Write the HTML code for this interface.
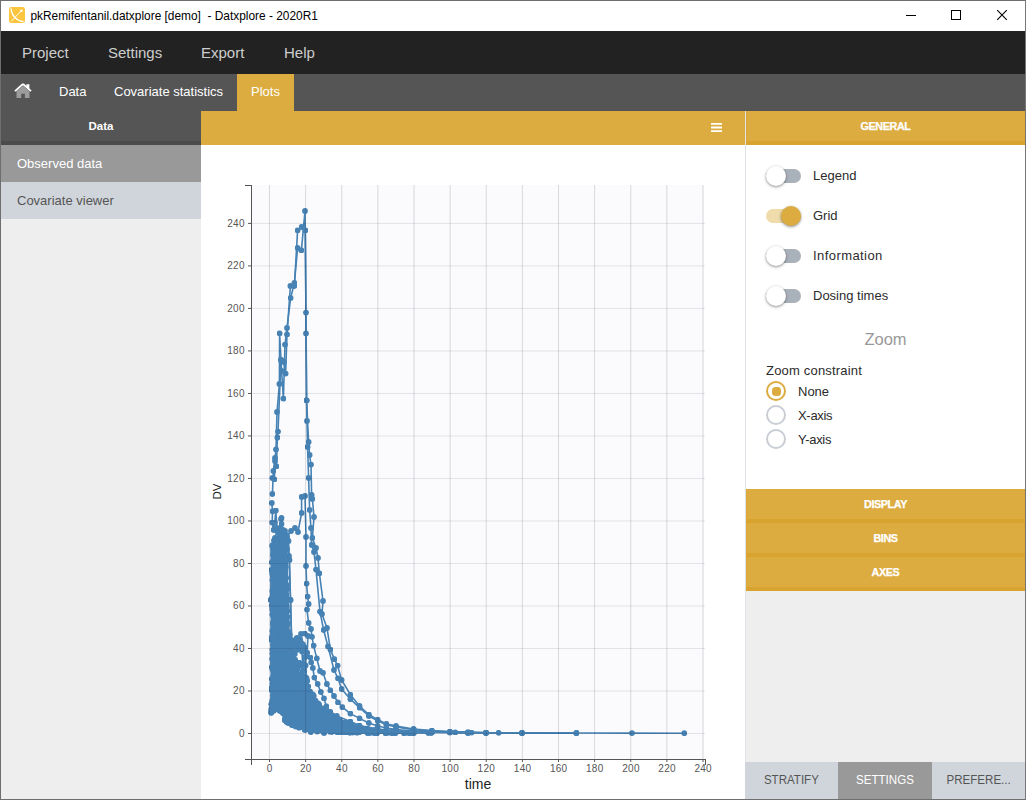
<!DOCTYPE html>
<html lang="en">
<head>
<meta charset="utf-8">
<title>pkRemifentanil.datxplore [demo] - Datxplore - 2020R1</title>
<style>
*{box-sizing:border-box;margin:0;padding:0}
html,body{width:1026px;height:800px;overflow:hidden;background:#fff}
body{font-family:"Liberation Sans",sans-serif;position:relative;color:#333}
.abs{position:absolute}
.t{position:absolute;white-space:nowrap;line-height:1}
#frame{position:absolute;left:0;top:0;width:1026px;height:800px;border:1px solid #6e6e6e;border-right-color:#777;z-index:50;pointer-events:none}
#titlebar{left:1px;top:1px;width:1024px;height:30px;background:#fff}
#menubar{left:1px;top:31px;width:1024px;height:43px;background:#222}
#tabbar{left:1px;top:74px;width:1024px;height:37px;background:#555}
#menubar .t{color:#cecece;font-size:15px;top:14px}
#tabbar .t{color:#fff;font-size:13px;top:11px}
#plotstab{left:236px;top:0;width:57px;height:37px;background:#dcac40}
#left{left:1px;top:111px;width:200px;height:688px;background:#eee}
#lefthead{left:0;top:0;width:200px;height:34px;background:#555;border-bottom:4px solid #4a4a4a}
#obs{left:0;top:34px;width:200px;height:37px;background:#999}
#cov{left:0;top:71px;width:200px;height:37px;background:#d0d5dc}
#center{left:201px;top:111px;width:544px;height:688px;background:#fff}
#centerhead{left:0;top:0;width:544px;height:34px;background:#dcac40}
#right{left:745px;top:111px;width:280px;height:688px;background:#eee;border-left:1px solid #dfe3e8}
.sec{position:absolute;left:0;width:279px;background:#dcac40;border-bottom:4px solid #d9a330;border-left:1px solid #dba737;border-right:1px solid #dba737;color:#fff;font-weight:bold;font-size:10.8px;letter-spacing:-.4px;text-align:center;-webkit-text-stroke:.25px #fff}
#general{top:0;height:34px;line-height:30px}
#rcontent{left:0;top:34px;width:279px;height:344px;background:#fff}
.track{position:absolute;left:20px;width:35px;height:14px;border-radius:7px;background:#a9b1bb}
.knob{position:absolute;margin-left:1px;width:20px;height:20px;border-radius:50%;background:#fff;box-shadow:0 1px 3px rgba(0,0,0,.45)}
.lbl{position:absolute;left:67px;font-size:13px;color:#2b2b2b;white-space:nowrap;line-height:1}
.radio{position:absolute;left:20px;width:20px;height:20px;border-radius:50%;border:2px solid #c9ced4;background:#fff}
.radio.on{border-color:#dcac40}
.radio.on::after{content:"";position:absolute;left:3.500px;top:3.500px;width:9px;height:9px;border-radius:3.500px;background:#dcac40}
.btab{position:absolute;top:651px;height:37px;font-size:13.2px;line-height:35px;text-align:center;color:#555;background:#d0d5dc}
.btab span{display:inline-block;transform:scaleX(.875)}
</style>
</head>
<body>
<div id="titlebar" class="abs">
  <svg class="abs" style="left:8px;top:6px" width="16" height="16" viewBox="0 0 17 17"><rect x="0" y="0" width="17" height="17" rx="2.5" fill="#fbc540"/><path d="M2 1.5C3 9 7.5 14.5 15.5 15.5" fill="none" stroke="#fff" stroke-width="1.3"/><path d="M2.5 15L13 4.2" fill="none" stroke="#fff" stroke-width="1"/><circle cx="13.2" cy="4" r="1.3" fill="#fff"/></svg>
  <div class="t" id="title" style="left:29.400px;top:10px;font-size:11.9px;color:#000">pkRemifentanil.datxplore [demo]&nbsp; - Datxplore - 2020R1</div>
  <svg class="abs" style="left:900px;top:0" width="124" height="30" viewBox="0 0 124 30"><g stroke="#000" stroke-width="1" fill="none" shape-rendering="crispEdges"><path d="M5 14.5h10"/><rect x="50.5" y="9.5" width="9" height="9"/></g><path d="M96.200 9.200l9.600 9.600M105.800 9.200l-9.600 9.600" stroke="#000" stroke-width="1.1" fill="none"/></svg>
</div>
<div id="menubar" class="abs">
  <div class="t" style="left:21px">Project</div>
  <div class="t" style="left:107px">Settings</div>
  <div class="t" style="left:200px">Export</div>
  <div class="t" style="left:283px">Help</div>
</div>
<div id="tabbar" class="abs">
  <svg class="abs" style="left:13px;top:9px" width="18" height="16" viewBox="0 0 18 16"><path d="M9 1L1 8.2" stroke="#fff" stroke-width="1.8" fill="none"/><path d="M9 1L17 8.2" stroke="#fff" stroke-width="1.8" fill="none"/><path d="M12.4 1.3h3v5.200l-3-2.700z" fill="#fff"/><path d="M2.5 8.2L9 2.800l6.500 5.400V15h-4.600v-4.300H7.200V15H2.500z" fill="#9c9c9c"/></svg>
  <div class="t" style="left:58px">Data</div>
  <div class="t" style="left:113px">Covariate statistics</div>
  <div id="plotstab" class="abs"><div class="t" style="left:14px">Plots</div></div>
</div>
<div id="left" class="abs">
  <div id="lefthead" class="abs"><div class="t" style="left:0;width:200px;text-align:center;top:10px;font-size:11.5px;font-weight:bold;color:#fff">Data</div></div>
  <div id="obs" class="abs"><div class="t" style="left:16px;top:12px;font-size:13px;color:#fff">Observed data</div></div>
  <div id="cov" class="abs"><div class="t" style="left:16px;top:12px;font-size:13px;color:#555">Covariate viewer</div></div>
</div>
<div id="center" class="abs">
  <div id="centerhead" class="abs">
    <svg class="abs" style="left:509px;top:11px" width="13" height="12" viewBox="0 0 13 12"><path d="M1 1.900h11M1 5.500h11M1 9.100h11" stroke="#fff" stroke-width="1.800" fill="none"/></svg>
  </div>
</div>
<svg id="chart" class="abs" style="left:0;top:0" width="1026" height="800" viewBox="0 0 1026 800">
  <rect x="252" y="185" width="452" height="574" fill="#fbfbfd"/>
  <g stroke="#555" stroke-width="1" fill="none" shape-rendering="crispEdges">
    <path d="M245 185.500H251.500V759.500"/>
    <path d="M245 759.500H705.500V765"/>
    <path d="M251.500 759.500V765"/>
  </g>
  <g stroke="#555" stroke-width="1" fill="none">
    <path d="M269.50 759.5V762"/>
    <path d="M305.62 759.5V762"/>
    <path d="M341.75 759.5V762"/>
    <path d="M377.88 759.5V762"/>
    <path d="M414.00 759.5V762"/>
    <path d="M450.12 759.5V762"/>
    <path d="M486.25 759.5V762"/>
    <path d="M522.38 759.5V762"/>
    <path d="M558.50 759.5V762"/>
    <path d="M594.62 759.5V762"/>
    <path d="M630.75 759.5V762"/>
    <path d="M666.88 759.5V762"/>
    <path d="M703.00 759.5V762"/>
    <path d="M248 733.50H251.5"/>
    <path d="M248 690.99H251.5"/>
    <path d="M248 648.48H251.5"/>
    <path d="M248 605.98H251.5"/>
    <path d="M248 563.47H251.5"/>
    <path d="M248 520.96H251.5"/>
    <path d="M248 478.45H251.5"/>
    <path d="M248 435.94H251.5"/>
    <path d="M248 393.44H251.5"/>
    <path d="M248 350.93H251.5"/>
    <path d="M248 308.42H251.5"/>
    <path d="M248 265.91H251.5"/>
    <path d="M248 223.40H251.5"/>
  </g>
  <g font-family="Liberation Sans, sans-serif" font-size="10" fill="#555" letter-spacing="0.300">
    <text x="269.7" y="772" text-anchor="middle">0</text>
    <text x="305.8" y="772" text-anchor="middle">20</text>
    <text x="341.9" y="772" text-anchor="middle">40</text>
    <text x="378.1" y="772" text-anchor="middle">60</text>
    <text x="414.2" y="772" text-anchor="middle">80</text>
    <text x="450.3" y="772" text-anchor="middle">100</text>
    <text x="486.4" y="772" text-anchor="middle">120</text>
    <text x="522.6" y="772" text-anchor="middle">140</text>
    <text x="558.7" y="772" text-anchor="middle">160</text>
    <text x="594.8" y="772" text-anchor="middle">180</text>
    <text x="631.0" y="772" text-anchor="middle">200</text>
    <text x="667.1" y="772" text-anchor="middle">220</text>
    <text x="703.2" y="772" text-anchor="middle">240</text>
    <text x="244.8" y="736.6" text-anchor="end">0</text>
    <text x="244.8" y="694.1" text-anchor="end">20</text>
    <text x="244.8" y="651.6" text-anchor="end">40</text>
    <text x="244.8" y="609.1" text-anchor="end">60</text>
    <text x="244.8" y="566.6" text-anchor="end">80</text>
    <text x="244.8" y="524.1" text-anchor="end">100</text>
    <text x="244.8" y="481.6" text-anchor="end">120</text>
    <text x="244.8" y="439.0" text-anchor="end">140</text>
    <text x="244.8" y="396.5" text-anchor="end">160</text>
    <text x="244.8" y="354.0" text-anchor="end">180</text>
    <text x="244.8" y="311.5" text-anchor="end">200</text>
    <text x="244.8" y="269.0" text-anchor="end">220</text>
    <text x="244.8" y="226.5" text-anchor="end">240</text>
  </g>
  <text x="478" y="788.500" text-anchor="middle" font-family="Liberation Sans, sans-serif" font-size="14" fill="#222">time</text>
  <text transform="translate(221 491.500) rotate(-90)" text-anchor="middle" font-family="Liberation Sans, sans-serif" font-size="11.5" fill="#222">DV</text>
  <defs><marker id="m" markerWidth="6" markerHeight="6" refX="3" refY="3" markerUnits="userSpaceOnUse"><circle cx="3" cy="3" r="2.900" fill="#4682b4"/></marker></defs>
  <polygon id="core" fill="#4682b4" points="270.500,558 272,551 276,548 280,545 284,547 287,553 288,562 288.500,600 290,640 296,652 296,668 302,676 309,688 319,702 332,718 348,727 365,731 380,732.5 343,733 324,731.5 306.4,728 294.4,722.5 288,718.5 283,709 279.900,706.500 276,706 271.500,710 270.500,706"/>
  <g fill="none" stroke="#4682b4" stroke-width="1.600" stroke-linejoin="round" marker-start="url(#m)" marker-mid="url(#m)" marker-end="url(#m)">
<polyline points="272.4,494 273.4,471 275,458 276,449.4 277,412 279.4,384 279.6,333.4 281,360 281.6,371 283.4,398.6 285,344.6 287,328 290.6,298 294.4,283 297.6,248 301.4,250.4 305,211 306,312.6 306.6,400.4 307,421 307.6,447 308.6,478 309.6,510 311,528 311.6,545 314,552 316,569.6 320,611.6 323.6,630 328,646.4 334,670 338,678.4 341.6,689 350.4,699.2 359.5,707.7 368.8,716 377.6,720.8 386.4,724.8 396,726.9 413.6,729.6 431.8,731 449.9,731.8 486,732.5"/>
<polyline points="272.4,478 274.4,479.4 275,461 276.4,466.4 277.4,437.6 278,431.6 281,360 284,362 285.6,373.6 287,334.4 290.4,286 294.4,286 297.6,230.4 301.6,227 305.4,230.4 306,333.4 306.6,400.4 308.6,442 309.6,455 311,464.6 311.6,495 312.4,499 314,517 312.4,538 316,548 318,558 319.4,573.4 323,601 322,614 327,628 330.4,649.6 334.4,659.2 337.6,665.6 341.6,680 350.4,694.7 359.5,706 368.8,714.5 377.6,719.6 386.4,723.8 396,726 413.6,729 431.8,730.6 449.9,731.6 468,732.2"/>
<polyline points="271.5,640 273,600 275,570 277,552 279,540 281,519 283,530 285,534 287,536 291,531 295,528 298,532 301.6,513 301.6,497 305,496 306,537 306,566 306.6,583.6 307.6,596.6 308.6,604 307,609.6 308.6,623 311,629 312,636.8 313.6,645.6 316.8,658.4 320,671 323,672.8 326.9,684 330.4,690.4 334,696 338,702.4 342.4,707.2 350.4,713.6 359.5,718.4 368.8,723 377.6,726 386.4,728 396,729.5 413.6,731 449.9,732.3 486,732.8 522,733 576.4,733.1"/>
<polyline points="271.5,690 273,668 275,655 278,648 282,644 287,640 292,641 297,638 301,634 304.8,633.6 308,636 307.2,652.8 310.4,657.6 311.2,662.4 312.8,668 314.4,677.6 317.6,684 320.8,692 324,698.4 326.4,706.4 330.4,712 336.8,716 350.4,721.6 359.5,725.6 377.6,729 396,731 431.8,732.4 468,733"/>
<polyline points="350.4,728 368.8,730 386.4,731 413.6,731.6 431.8,732 449.9,732.3 455.3,732.4 468,732.5 471.5,732.6 486,732.7 498.6,732.8 522,732.9 576.4,733 632,733.1 684.3,733.2"/>
<polyline points="341,726 359.5,729 377.6,730.5 396,731.2 413.6,731.8 431.8,732.2 449.9,732.5 468,732.7 486,732.9 522,733 576.4,733.1"/>
<polyline points="271.2,712.8 272.2,711 274,710.5 276,709 278,708.5 279.9,707.6 281.5,709 283,711 285,715 288,720.6 290.5,722 293,723.5 296,725.5 299.4,727 305,730 310.8,732 324,733"/>
<polyline points="270.5,600 271.5,570 273,548 275,538 277,531 279,533 281.5,518 281.5,524 283,534 285,531 287,538 288.5,541 289.5,560 290.5,600 291.5,640 293,670 296,690 300,705 306,716 315,724 330,730 350,732.5"/>
<polyline points="271.8,503 272.5,511.3 272.2,522.5 273.5,530 274.8,522.5 275.8,510.5 277,528 279,540 281,548 284,552 287,549 289,556 290.5,600 292,650 295,680 300,700 310,718 325,728 345,732"/>
<polyline points="273.1,701.4 274,702.3 274.9,703.8 275.8,702.8 276.7,701 277.6,697.3 279.4,704.8 281.2,701.2 282.1,696.4 283.9,696.8 284.9,694.9 285,696.2 285.9,710.9 286.8,715.8 287.7,719.4 288.6,720.5 290.4,722.5 292.3,724.1 294.1,724.2 295.9,725.4 299.5,726.5 303.1,727.3 306.7,728.4 312.1,729.5 317.5,730.3 324.8,731 332,731.8 339.2,732.2"/>
<polyline points="273.1,699.1 274,699.2 274.9,694.3 275.8,696.9 276.7,700.4 277.6,702.1 279.4,703.3 280.3,691.6 282.1,700.9 283.9,698.3 285.1,698.6 286,709.6 286.9,713 287.8,717 288.7,717.9 290.5,719.6 292.3,721.3 294.1,721.9 295.9,723.5 299.5,724.3 303.1,726.1 306.7,727.7 312.2,728.3 317.6,729.5 324.8,730.4 332,731.2 339.2,731.8 348.3,732.3"/>
<polyline points="273.1,698.1 274,702.8 274.9,695.1 275.8,706 276.7,702.3 277.4,697.2 278.3,706.8 279.2,710 280.1,710.9 281,711 282.8,713 284.6,719.5 286.4,720.2 288.2,720.8 291.8,723.7 295.4,725.2 299.1,726 304.5,727.5 309.9,728.4 317.1,729.7 324.3,730.6 331.6,731.5 340.6,732.1 349.6,732.5 367.7,733 385.8,733.2"/>
<polyline points="273.1,695.3 274,690.9 274.9,687.2 275.8,695.9 276.7,694.9 278.5,683.1 280.3,689.4 281.2,701.4 283,685.5 283.1,681.8 284,697.9 284.9,705.1 285.8,707.8 286.7,711.1 288.5,714 290.3,716.6 292.2,719.2 294,719.8 297.6,722.2 301.2,724.8 304.8,725.8 310.2,728.2 315.6,729.7 322.9,730.8 330.1,731.7 337.3,732.3"/>
<polyline points="274,686.6 274.9,687.6 275.8,678.5 276.7,683.2 277.4,689.1 278.3,700 279.3,706.5 280.2,709.9 281.1,710.1 282.9,712.7 284.7,720.2 286.5,722 288.3,723.1 291.9,725.2 295.5,726.6 299.1,727.7 304.5,729.4 310,730.6 317.2,731.6 324.4,732.1"/>
<polyline points="273.1,684.1 274,690.9 274.9,679.1 275.8,677.5 276.7,685.2 278.5,687.9 280,680.6 280.9,699.2 281.8,706.3 282.7,709.5 283.6,709.2 285.4,715.9 287.2,717.8 289,718.9 290.8,719.7 294.4,720.8 298,722.7 301.6,724.7 307.1,725.9 312.5,727 319.7,728.5 326.9,730.1 334.2,730.5 343.2,731.6 352.2,732 370.3,732.7"/>
<polyline points="272.4,683.5 273.3,683.9 274.2,686.7 275.1,679.8 276,690.1 276.9,683.4 277.8,687.9 278.7,680 280.5,687.9 282.3,683.7 284.1,679.6 285.9,684.2 286.2,680.9 287.2,698 288.1,705.7 289,707.5 289.9,711.4 291.7,713.4 293.5,715.4 295.3,718.4 297.1,719 300.7,721.4 304.3,722.4 307.9,723.1 313.3,725.6 318.8,726.7 326,728.4 333.2,729.4 340.4,730.4 349.5,731.3 358.5,731.9"/>
<polyline points="272.4,688.5 273.3,682 274.2,681 275.1,683.6 276,677 276.9,683.8 277.8,679.9 279.6,678.9 280.5,677.5 282.3,675.5 284.1,671.5 285.3,669 286.2,685.2 287.1,695 288,696.3 288.9,698.9 290.7,704 292.5,707.1 294.3,707.5 296.1,708.5 299.7,712.7 303.3,714.9 307,718.8 312.4,721.4 317.8,723.8 325,726.1 332.2,727.8 339.5,729.2 348.5,730.5 357.5,731.4 375.6,732.5"/>
<polyline points="272.4,669 273.3,675.7 274.2,675.3 275.1,667 276,678.8 276.9,669.9 278.7,665.4 279.6,670 281.4,668.5 283.2,669.3 284.1,676.3 285.9,673.6 286.6,669.5 287.6,693.5 288.5,701.9 289.4,708.7 290.3,710.1 292.1,712 293.9,713.9 295.7,715.9 297.5,717.4 301.1,720.5 304.7,720.9 308.3,723.3 313.7,725.3 319.2,727.5 326.4,729 333.6,730.4 340.8,731 349.9,731.8 358.9,732.4 377,732.9 395,733.2 413.1,733.3"/>
<polyline points="271.8,687.4 272.8,682.9 273.7,676.7 274.6,677.3 275.5,676.2 276.4,689 277.3,677.7 279.1,669.7 280.9,666.1 282.7,670.9 283.6,679 284.7,679.1 285.6,693.5 286.6,700.4 287.5,708.4 288.4,712.8 290.2,715.3 292,717.5 293.8,721.1 295.6,720.7 299.2,722.6 302.8,724.3 306.4,726.4 311.8,727.5 317.3,728.9 324.5,730 331.7,731 338.9,732 348,732.3 357,732.7"/>
<polyline points="273.1,666.2 274,661 274.9,658.4 275.8,667.8 276.7,665.4 277.6,668.8 278.5,664.5 279.4,659.3 281.2,665.5 282.1,655.5 283,649.8 284.9,660.7 285.9,655 286.8,681.4 287.7,692.8 288.6,699.9 289.5,701.4 291.3,708 293.1,709.2 294.9,712.2 296.7,712.1 300.3,715.9 303.9,718.9 307.5,721 313,723 318.4,725.6 325.6,727.8 332.8,728.9 340,730.2 349.1,731.4 358.1,731.9 376.2,732.7 394.2,733.1"/>
<polyline points="272.4,679.2 273.3,678.6 274.2,670.7 275.1,665.4 276,664.7 276.9,666.9 278.7,676.1 279.6,667.6 281.4,674 282.3,662.7 283.2,658.5 283.3,664.5 284.2,685.7 285.1,693.1 286,700.4 286.9,702.6 288.7,706.9 290.5,708.6 292.3,708.8 294.1,713.1 297.7,714.9 301.3,718.1 304.9,719 310.4,723.2 315.8,724.7 323,726.8 330.2,728.6 337.4,729.6 346.5,730.9 355.5,731.7 373.6,732.6"/>
<polyline points="273.1,664 274,685.3 274.9,667 275.8,664 276.7,671.2 278.5,677.7 280.2,669.5 281.1,690.7 282,700.4 282.9,708.5 283.8,710.3 285.6,713.1 287.4,715.8 289.3,717.3 291.1,719.5 294.7,721 298.3,722.9 301.9,724.1 307.3,726.2 312.7,727.8 320,729.3 327.2,730.3 334.4,731.1 343.4,732 352.5,732.5"/>
<polyline points="273.1,677.3 274,676.1 274.9,678.6 275.8,674.7 276.7,658.8 278.5,665.5 280.3,656.9 282.1,667.9 283,652.1 284.1,676.8 285,687.2 285.9,698.5 286.8,701.1 287.7,703.7 289.5,708.9 291.3,711.5 293.1,713.7 294.9,714.2 298.5,717.8 302.1,721 305.7,721.8 311.1,724.4 316.6,726.2 323.8,728.4 331,729.9 338.2,730.7 347.3,731.6 356.3,732.2 374.4,732.8 392.4,733.2 410.5,733.3"/>
<polyline points="271.8,679 272.8,681.7 273.7,682.7 274.6,661.4 275.5,668.8 276.4,669.9 277.3,667.9 279.1,668.5 280.9,660.8 281.8,667.5 283.3,667.1 284.2,675.9 285.1,685.7 286.1,689.6 287,691.8 288.8,696.5 290.6,698 292.4,700.3 294.2,702.6 297.8,709.2 301.4,711.8 305,714.8 310.4,716.8 315.9,720.3 323.1,724.5 330.3,725.9 337.5,727.6 346.6,729.5 355.6,730.6 373.7,732 391.7,732.7 409.8,733.1"/>
<polyline points="272.4,659.4 273.3,654.5 274.2,663.3 275.1,658.9 276,646.9 276.9,650.8 278.7,633 279.5,655.2 280.4,674.5 281.3,677.7 282.2,684.5 283.1,692.1 284.9,694.9 286.7,697.5 288.5,701.7 290.4,703.6 294,709.8 297.6,713 301.2,716.4 306.6,720 312,723.2 319.3,726.5 326.5,728.3 333.7,729.9 342.7,731.2 351.8,731.9 369.8,732.8"/>
<polyline points="272.4,658.3 273.3,659 274.2,670 275.1,659.5 276,663.6 276.9,624.3 277.8,646.1 279.6,641.7 280.5,661.4 281.4,661.2 282.3,645.2 283.2,662.3 285,652.5 286.7,649.2 287.6,675.8 288.6,683.2 289.5,690.6 290.4,698.1 292.2,704 294,706.5 295.8,705.3 297.6,710.5 301.2,713.7 304.8,714.3 308.4,717.3 313.8,720 319.3,723 326.5,724.6 333.7,727 340.9,728.4 350,730 359,730.9 377.1,732 395.1,732.7"/>
<polyline points="272.4,653.6 273.3,671.4 274.2,654.2 275.1,643.3 276,670.3 276.9,627.6 277.8,656.7 278.7,640.8 280.5,651.7 281.4,645.5 283.2,652.1 285,661.2 285.9,638.1 286,644.8 286.9,665.6 287.8,674.2 288.7,679.8 289.6,688.6 291.4,693.3 293.3,696.4 295.1,699.6 296.9,703.4 300.5,709.7 304.1,710.1 307.7,714.2 313.1,718.4 318.5,721.7 325.8,724.6 333,727.2 340.2,728.9 349.2,730.3 358.3,731.3 376.3,732.4 394.4,733 412.5,733.2"/>
<polyline points="272.4,649.5 273.3,659.5 274.2,635.1 275.1,632.5 276,632.8 276.9,637.6 278.7,642.9 280.5,644.5 282.3,643.5 283.2,645.9 284.7,645.5 285.6,658.4 286.5,675.3 287.4,686.9 288.3,689.2 290.1,695.7 292,696.9 293.8,702 295.6,702.6 299.2,705.3 302.8,711.2 306.4,713.7 311.8,716.6 317.2,719 324.5,721.9 331.7,725 338.9,727.1 347.9,728.7 357,729.9 375,731.5 393.1,732.4 411.2,732.9"/>
<polyline points="273.1,655.1 274,653.4 274.9,633.8 275.8,644.6 276.7,648 277.6,639.7 279.4,637 281.2,645.4 283,650.1 284.9,644.7 285.6,634.6 286.5,663.5 287.4,674.8 288.3,681.6 289.2,690.3 291,693.2 292.8,697.4 294.6,701.9 296.4,704.4 300,708.6 303.6,714.2 307.2,717.7 312.7,722 318.1,724.7 325.3,727.7 332.5,729.4 339.7,730.8 348.8,731.7 357.8,732.3 375.9,732.9"/>
<polyline points="274,647.4 274.9,660.3 275.8,661.5 276.7,651.9 277.6,648 279.4,647.3 281.2,643.2 282.8,647.8 283.7,664.6 284.6,674.1 285.5,684.6 286.4,689.2 288.2,694.9 290,696.3 291.8,701.5 293.6,704.3 297.3,712 300.9,716.1 304.5,718.1 309.9,722.6 315.3,725.4 322.5,728 329.8,730 337,730.8 346,731.8 355.1,732.4"/>
<polyline points="274,653.4 274.9,645.6 275.8,639.1 276.7,623.1 278.5,638.2 280.3,622.1 282.1,645.8 282.9,618.3 283.8,662.4 284.7,682.4 285.6,691.5 286.5,697.5 288.3,701.6 290.1,701.9 291.9,705.8 293.7,709.4 297.3,712.9 300.9,714.6 304.5,718.4 309.9,721.6 315.4,724.1 322.6,726.5 329.8,728.3 337,729.9 346.1,731.2 355.1,731.9"/>
<polyline points="271.8,667.1 272.8,664.3 273.7,663 274.6,666.1 275.5,654.3 276.4,643.7 277.3,628.6 278.2,651.7 280,643.7 281.8,655.2 283.1,638 284,676.2 284.9,688.9 285.8,695 286.7,702 288.5,702.1 290.3,704.8 292.1,707.8 293.9,708.5 297.5,713.5 301.1,715.9 304.8,717.8 310.2,720.4 315.6,721.7 322.8,724.9 330,726.9 337.3,728.4 346.3,729.6 355.3,730.7 373.4,731.9 391.5,732.6 409.5,733"/>
<polyline points="271.8,637.9 272.8,644.6 273.7,632.6 274.6,619.2 275.5,635.6 276.4,635.2 277.3,628 278.2,644.9 280,647.3 281.8,616.4 282.7,622.7 284.5,628.4 285.9,619.5 286.8,651 287.7,664.8 288.6,664.2 289.5,672.7 291.3,677.2 293.1,687.2 294.9,688.2 296.7,690.7 300.4,698.5 304,701.9 307.6,704.6 313,709.7 318.4,713.8 325.6,720 332.9,723.5 340.1,725.2 349.1,727.5 358.2,729.4 376.2,731.5 394.3,732.4 412.3,732.9"/>
<polyline points="272.4,614.4 273.3,630.6 274.2,617.5 275.1,618.2 276,624.8 276.9,634.6 278.7,615.9 279.6,616.9 280.5,637.4 282.3,609.4 284.1,629.5 285.4,630.3 286.3,641.1 287.2,655.5 288.1,671.7 289,672.3 290.8,680.4 292.6,688.1 294.4,693.1 296.2,694.8 299.8,699.7 303.4,702.8 307.1,707.5 312.5,713.7 317.9,715.8 325.1,720.9 332.3,722.9 339.6,726.1 348.6,728.1 357.6,729.6 375.7,731.4 393.8,732.3"/>
<polyline points="272.4,630.9 273.3,625.8 274.2,618.5 275.1,618 276,614.8 276.9,623.2 278.7,627 280.5,616.7 282.3,615.4 283.2,628.8 285,651.8 286.5,608.4 287.4,647.8 288.3,662.5 289.2,670.8 290.1,681.1 291.9,688.2 293.7,692.4 295.5,694.6 297.3,696.6 301,703.6 304.6,708.8 308.2,712.1 313.6,718.4 319,721.9 326.2,725.6 333.5,727.6 340.7,729.3 349.7,731.1 358.8,731.7 376.8,732.6 394.9,733.1 412.9,733.3"/>
<polyline points="272.4,605.9 273.3,623 274.2,638 275.1,618.5 276,627.1 276.9,600.7 277.4,619.5 278.3,641.6 279.2,660.5 280.1,671.1 281,673.5 282.8,681.3 284.6,686.7 286.5,690.7 288.3,695.5 291.9,704.5 295.5,706.6 299.1,713.9 304.5,718.5 309.9,722.8 317.2,726.1 324.4,728.3 331.6,729.9 340.6,731.3 349.7,732 367.7,732.9 385.8,733.2 403.9,733.3"/>
<polyline points="273.1,622.4 274,645.5 274.9,615.8 275.8,647.3 276.7,619.5 278.5,611.3 280.3,603.6 281.2,624 283,598.1 284.9,625.8 285.8,610.2 286.3,594.4 287.2,643.6 288.1,662.2 289,674.2 289.9,685 291.7,695.1 293.5,698.5 295.3,703.9 297.1,705.6 300.7,712.3 304.4,715.5 308,718.9 313.4,722.8 318.8,725.7 326,728 333.3,729.6 340.5,730.8 349.5,731.8 358.5,732.4 376.6,733 394.7,733.2"/>
<polyline points="273.1,632.8 274,627 274.9,629.2 275.8,610.7 276.7,620.8 278.5,628.8 280.3,622.2 282.1,610 283.9,627.2 284.8,601.9 285.7,639.4 286.6,660.5 287.5,669.2 288.4,673.7 290.2,682.3 292,691.1 293.8,696.4 295.6,696 299.2,701.2 302.9,706.7 306.5,710.3 311.9,713.3 317.3,716.8 324.5,721.1 331.8,724.7 339,726.1 348,728.3 357,729.7 375.1,731.7 393.2,732.5 411.2,733"/>
<polyline points="273.1,610.1 274,615.7 274.9,624.2 275.8,624.7 276.7,606.7 277.6,610.5 279.4,617.2 281.2,614.3 283,609.3 283.9,620.8 284.8,623.7 285.7,637 286.6,654.9 287.5,661.9 288.4,666.9 290.2,679.8 292,682.3 293.8,681.9 295.6,688.6 299.2,695.8 302.8,700.7 306.4,706.6 311.8,712.6 317.3,716.6 324.5,721.5 331.7,725.1 338.9,726.8 348,729.1 357,730.4 375.1,732.1 393.1,732.8"/>
<polyline points="273.1,623.9 274,593.4 274.9,583.3 275.8,612.1 276.7,598 277.6,603.9 279.4,581.2 281.2,621.1 283,614.8 284.9,583.9 286.1,578 287,636.5 287.9,649.1 288.8,655.7 289.7,660.9 291.5,676.4 293.3,676.8 295.1,683.5 296.9,685.3 300.5,693.9 304.1,699.7 307.8,703.2 313.2,708.2 318.6,712.2 325.8,718.7 333,721.8 340.3,725 349.3,726.9 358.3,728.7 376.4,731.2 394.5,732.3 412.5,732.9"/>
<polyline points="273.1,628.9 274,623.2 274.9,599.4 275.8,596.2 276.7,601.6 277.6,599.7 279.4,613.6 280.3,601.8 282.1,596.7 283.9,612.7 284.9,607.4 285.9,596.6 286.8,644.1 287.7,656.1 288.6,661.7 289.5,679.5 291.3,683 293.2,689.9 295,691.5 296.8,695.4 300.4,702.4 304,707.3 307.6,712.3 313,717.8 318.4,721.6 325.7,725 332.9,727.2 340.1,729.6 349.1,730.9 358.2,731.8 376.2,732.7"/>
<polyline points="272.4,635.5 273.3,606.5 274.2,624.3 275.1,626.4 276,606.3 276.9,592.3 278.7,607.9 279.6,599.2 281.4,596.1 282.3,576.3 283.2,593.2 285,599.1 285.7,567.2 286.6,640.4 287.5,664.9 288.4,674.2 289.3,683.8 291.1,693.2 292.9,694.5 294.8,696.4 296.6,698.8 300.2,702.7 303.8,705.9 307.4,708.1 312.8,714.4 318.2,717.4 325.5,720.9 332.7,723.8 339.9,725.8 348.9,727.5 358,729.3 376,731.1 394.1,732.3 412.2,732.7"/>
<polyline points="272.4,610.1 273.3,616.1 274.2,618 275.1,599.7 276,631.5 276.9,596.1 277.8,611.3 279.6,595.3 281.4,605.3 283.2,573.1 284.1,611.3 285.9,590.7 286.8,585.1 287.7,611.1 288.6,635 289.5,644.9 290.4,643.6 292.2,659.5 294,664.3 295.8,671.8 297.7,675.5 301.3,689.5 304.9,692.7 308.5,697.1 313.9,705.1 319.3,710.4 326.6,717.6 333.8,721.1 341,724.2 350,727 359.1,729.2 377.1,731.4 395.2,732.4 413.3,732.9"/>
<polyline points="272.4,608.3 273.3,600.5 274.2,612.7 275.1,599.5 276,604.2 276.9,620.2 278.7,572.4 279.6,583 281.4,566 282.3,581 284.1,577.8 285.9,600.9 286.5,556.1 287.4,632.5 288.3,663 289.2,668.7 290.1,676.8 291.9,682.8 293.8,687.4 295.6,692.9 297.4,693.6 301,698.3 304.6,704 308.2,707.8 313.6,713.4 319,716.5 326.3,720.8 333.5,723.7 340.7,726.1 349.7,728.5 358.8,729.6 376.8,731.6 394.9,732.5 413,733"/>
<polyline points="273.1,597.5 274,599.1 274.9,579.6 275.8,593.9 276.7,596.4 278.5,598.7 279.4,584.6 280.3,589 281.2,591.9 282.1,583 283,613.8 284.7,605.1 285.6,640.7 286.5,659.7 287.4,666.8 288.3,672.1 290.1,680.7 292,687.2 293.8,692.6 295.6,691 299.2,699 302.8,702.2 306.4,704 311.8,711.3 317.2,715.1 324.5,718.7 331.7,722.6 338.9,724.5 347.9,726.7 357,728.9 375,730.9 393.1,732.2 411.2,732.7"/>
<polyline points="272.4,597.1 273.3,593.3 274.2,627.7 275.1,571.8 276,611.5 276.9,592.8 277.8,568.1 279.6,570.4 280.5,597.2 281.4,620.3 282.8,572.7 283.7,620.1 284.6,640.5 285.5,648.5 286.4,662.2 288.2,672.9 290,677.1 291.9,685.7 293.7,689 297.3,695.3 300.9,701.2 304.5,706.9 309.9,711.7 315.3,717.2 322.6,721.3 329.8,724.6 337,727.1 346,729.1 355.1,730.7 373.1,732.1"/>
<polyline points="273.1,603.8 274,617.7 274.9,569.9 275.8,593.7 276.7,574.8 278.4,583.6 279.3,629.6 280.2,658.5 281.1,671.9 282,677.7 283.8,688.9 285.6,689.6 287.4,695.6 289.2,697 292.8,703.8 296.5,707.9 300.1,711.6 305.5,715.4 310.9,718.5 318.1,723 325.4,725 332.6,727.2 341.6,729.1 350.6,730.2 368.7,732.1"/>
<polyline points="271.8,605.2 272.8,577.3 273.7,596.4 274.6,600.6 275.5,606.5 276.4,588.5 277.3,584.8 278.2,628.1 280,607.3 281.8,585.6 283.6,575 284.5,536.3 286.2,586.6 287.1,625.3 288,651 288.9,652.6 289.8,662.4 291.6,680.5 293.4,681.7 295.2,688.2 297,692 300.6,701.5 304.2,707.9 307.8,712.2 313.3,718.3 318.7,722.3 325.9,725.5 333.1,728.5 340.3,730 349.4,731.1 358.4,731.8 376.5,732.7"/>
<polyline points="274,598.4 274.9,609.9 275.8,589.1 276.7,579.2 278.5,588.3 280.3,590.4 281.2,620.3 282.1,581.1 283.9,573.9 285.2,587.6 286.1,615.7 287,644.8 287.9,652.3 288.8,663.1 290.6,672.1 292.4,679.2 294.2,688.1 296,692.5 299.7,698.1 303.3,704.4 306.9,707.9 312.3,715.4 317.7,721 324.9,724.4 332.2,727.2 339.4,729 348.4,730.6 357.5,731.7 375.5,732.7 393.6,733.1 411.6,733.3"/>
<polyline points="273.1,603.2 274,599.7 274.9,566.3 275.8,585.8 276.7,576.7 277.6,591.9 278.5,567.7 279.4,564.8 280.3,592.7 281.2,587.8 283,586.6 284.9,569.8 286.1,588.6 287,599.4 287.9,631.3 288.8,642.1 289.7,646.2 291.5,660.6 293.3,673.3 295.1,677.7 296.9,685.1 300.5,695.5 304.1,699.3 307.8,706.3 313.2,712.6 318.6,717.8 325.8,723.4 333,726.2 340.3,728.6 349.3,730.2 358.3,731.2 376.4,732.4"/>
<polyline points="273.1,553 274,592.1 274.9,594.2 275.8,569.9 276.7,571.4 278.5,603.5 279.4,563.7 280.3,588.8 282.1,551.4 283.9,560.8 284.9,543.2 285.8,610 286.7,630.8 287.7,646.8 288.6,656.7 290.4,671.7 292.2,673 294,683.9 295.8,686.9 299.4,692.2 303,695.7 306.6,701.7 312,706.1 317.5,712.2 324.7,717.3 331.9,721.9 339.1,724.5 348.2,727 357.2,729 375.3,731.1 393.3,732.2"/>
<polyline points="272.4,574.3 273.3,574.1 274.2,596.4 275.1,551.9 276,596.3 276.9,596.4 277.8,591.8 279.6,550.3 280.5,576.5 281.4,588.4 283.2,564.7 284.9,574.8 285.8,607 286.7,620 287.6,636.7 288.5,640.5 290.3,659.7 292.1,661.8 293.9,674.3 295.7,674.7 299.3,684.6 302.9,692.4 306.5,703.1 312,709.8 317.4,714.4 324.6,721.2 331.8,724.7 339.1,727.1 348.1,729.9 357.1,730.9 375.2,732.3 393.2,732.9"/>
<polyline points="273.1,560.5 274,540.4 274.9,586 275.8,549.4 276.7,540.4 278.5,565.7 279.1,549.9 280,623.4 280.9,650.8 281.8,660.8 282.7,670.6 284.5,679.8 286.3,683.4 288.1,688.9 289.9,695.1 293.5,697.6 297.2,702.5 300.8,706.8 306.2,711 311.6,715.1 318.8,720.1 326.1,722.8 333.3,725.5 342.3,727.7 351.3,729.3 369.4,731.3 387.5,732.3"/>
<polyline points="272.4,590.9 273.3,551.1 274.2,547.6 275.1,570.2 276,569.2 276.9,553.4 277.8,571.9 279.6,542.2 280.5,561.9 282.3,563 284.1,558.9 285,539.6 285.7,558.9 286.6,605.2 287.5,616.7 288.4,635.4 289.3,636.6 291.1,646.5 292.9,657.1 294.7,660.7 296.6,668.2 300.2,675 303.8,681 307.4,688.7 312.8,694.4 318.2,703.3 325.5,711.6 332.7,715.7 339.9,719.9 348.9,723.5 358,726.4 376,729.8 394.1,731.4 412.2,732.5"/>
<polyline points="272.4,545.2 273.3,568.9 274.2,581.9 275.1,590.2 276,589.5 276.9,548.4 278.7,571 280.5,569.4 282.3,566.1 284,604.9 284.9,604.8 285.8,636.1 286.7,653.3 287.6,666.1 289.4,676.2 291.2,683.9 293,689.3 294.8,691.8 298.4,702.9 302.1,706.3 305.7,712.2 311.1,717.1 316.5,720.3 323.7,725.3 331,727.6 338.2,729.4 347.2,730.7 356.2,731.7 374.3,732.7 392.4,733 410.4,733.2"/>
<polyline points="273.1,591.4 274,586 274.9,597.4 275.8,569.4 276.7,567.2 278.5,569.5 280.3,571.4 282.1,560.7 283,577.9 284.9,570.1 285.1,577.2 286,605.2 286.9,624.2 287.8,638.4 288.7,645.4 290.6,662.2 292.4,663.6 294.2,670.9 296,679.6 299.6,688.4 303.2,698.2 306.8,703.7 312.2,712.2 317.6,716.6 324.9,721.9 332.1,725.1 339.3,727.7 348.4,729.8 357.4,731.1 375.4,732.3 393.5,732.8 411.6,733.1"/>
<polyline points="274,589.7 274.9,571.9 275.8,550.5 276.7,553.2 278.5,553.2 279.4,537.5 279.5,582.3 280.4,603.5 281.3,614.1 282.2,629.3 283.1,634.1 284.9,649.6 286.7,649.2 288.5,655.8 290.3,664.1 293.9,679.6 297.5,682.7 301.1,690.6 306.6,699.7 312,706.7 319.2,715 326.4,719.3 333.6,722 342.7,725.7 351.7,728.5 369.8,731.1 387.8,732.2 405.9,732.8"/>
<polyline points="272.4,580.1 273.3,593 274.2,566.6 275.1,538.8 276,540.6 276.9,553.4 277.8,565.3 279.6,552.2 281.4,545.8 283.2,570.6 284.7,550.1 285.6,603.8 286.5,623.3 287.4,637.1 288.3,653.7 290.1,658.8 291.9,667.7 293.8,669.1 295.6,671.8 299.2,682.2 302.8,689 306.4,694.2 311.8,705.3 317.2,706.8 324.5,713.3 331.7,718.3 338.9,722.1 347.9,725.5 357,727.6 375,730.3 393.1,731.9 411.2,732.6"/>
<polyline points="272.4,546.2 273.3,586.6 274.2,554.6 275.1,572.4 276,566.7 276.9,553.3 278.7,570.5 280.5,547.1 282.2,550.6 283.1,585 284,619.5 284.9,626.8 285.8,639.6 287.7,648.2 289.5,653.6 291.3,659.3 293.1,666.5 296.7,673.7 300.3,684.3 303.9,693.2 309.3,698.7 314.7,707.2 322,712.9 329.2,719.4 336.4,722.5 345.5,726 354.5,728.9 372.5,731.1 390.6,732.3 408.7,732.8"/>
<polyline points="272.4,572.4 273.3,549.9 274.2,554.2 275.1,542.2 276,552.3 276.9,551.4 278.7,545.9 279.6,550.3 280.5,569.2 282.3,537.9 284.1,541.6 285,539.2 285.8,536.7 286.7,607.1 287.6,638.8 288.5,656.3 289.4,666.1 291.2,669.7 293,678.4 294.8,679.1 296.6,685.3 300.3,693.4 303.9,695.1 307.5,699.6 312.9,705.3 318.3,709.3 325.5,715.1 332.8,719.9 340,722.8 349,725.2 358.1,727.7 376.1,730.5 394.2,731.6 412.2,732.4"/>
<polyline points="271.8,562.3 272.8,555.2 273.7,547.3 274.6,566 275.5,549.8 276.4,542.5 277.3,548.5 279.1,539.7 280.9,539.1 282.7,536.1 284.5,563.5 286.1,545.6 287,589.1 287.9,623.6 288.8,637.1 289.7,634.5 291.5,647.1 293.4,654.7 295.2,659.7 297,666.9 300.6,681 304.2,682.8 307.8,689.7 313.2,699.4 318.6,708.7 325.9,712.5 333.1,717.7 340.3,722.5 349.3,725.6 358.4,727.8 376.4,730.8 394.5,732"/>
<polyline points="271.3,708.9 272.2,700.8 273.1,690.8 274,689.4 274.9,683.4 275.8,675 276.7,674.3 278.5,671.5 280.3,659.2 282.1,655.4 283.9,655.2 285.8,657.6 286.7,655.7 288.5,648.3 289.4,654.1 291.2,654 293,651.3 293.9,645.4 295.7,642.5 297.5,649.8 298.4,644.1 300.2,639.5 301.1,642.7 302.9,644.3 303.8,649.1 304.7,647.3 305.6,665.5 306.5,677.9 307.4,680.8 308.3,686.4 310.1,691.5 311.9,695 313.8,696 315.6,700.7 319.2,704.6 322.8,708.3 326.4,711.4 331.8,715.2 337.2,719.2 344.5,722.6 351.7,724.8 358.9,727 367.9,728.8 377,730.3 395,731.7 413.1,732.6 431.2,733"/>
<polyline points="271.3,704.2 272.2,689.8 273.1,686.3 274,680.6 274.9,671.6 275.8,672.8 276.7,664.9 277.6,659.8 279.4,660.5 281.2,660.8 282.1,659.3 283,650.4 283.9,650.2 285.8,652.8 286.7,654 288.5,653.5 290.3,654.8 292.1,653.8 293.9,654.1 294.8,654.1 296.6,638.6 298.4,641.4 299.3,648.1 301.1,644.5 302,651.5 302.9,670.5 303.8,679.9 304.7,684.2 305.6,687.2 307.4,693.4 309.2,697.3 311,699.4 312.9,702.1 316.5,706.4 320.1,709.4 323.7,712.5 329.1,716.6 334.5,719.7 341.8,723 349,725.4 356.2,727.2 365.2,729.1 374.3,730.2 392.3,731.9 410.4,732.6 428.4,733"/>
<polyline points="271.3,710.7 272.2,704.8 273.1,695 274,692.7 274.9,689.2 275.8,681.5 276.7,679 278.5,677.4 279.4,675.6 281.2,675.3 282.1,675.7 283.9,670.6 284.9,665.8 286.7,666.3 287.6,668.3 288.5,670.3 290.3,668.7 292.1,673.7 293,668.3 294.8,665.7 296.6,662.5 297.5,668.8 299.3,662.8 301.1,665.5 302.9,663.6 304.7,657.1 305.6,656.7 306.5,680.4 307.4,687.4 308.3,692.9 309.2,697.7 311,701 312.9,703.2 314.7,705.4 316.5,708.7 320.1,711.3 323.7,713.4 327.3,716.2 332.7,719.2 338.1,722 345.4,724.8 352.6,727.1 359.8,728.6 368.8,729.8 377.9,731 395.9,732.1 414,732.8"/>
<polyline points="271.3,712.3 272.2,711.1 273.1,709.1 274,703 274.9,700.3 275.8,694.7 276.7,694.2 278.5,690.6 280.3,687.5 282.1,683.8 283.9,687.5 285.8,679.8 286.7,687.5 287.6,684.5 289.4,681.8 291.2,683.2 293,682.2 294.8,680.6 296.6,682.3 298.4,682 300.2,677.1 302,672.5 302.9,678.1 303.8,676.2 305.6,680.2 306.5,689.5 307.4,696.9 308.3,699.9 309.2,703.8 311,706.9 312.9,709.3 314.7,712.1 316.5,713.3 320.1,715.6 323.7,718.4 327.3,719.9 332.7,722.8 338.1,724.7 345.4,726.7 352.6,728.3 359.8,729.7 368.8,730.8 377.9,731.5 395.9,732.5"/>
<polyline points="271.3,712.5 272.2,710.8 273.1,706.1 274,705.1 274.9,702 275.8,699.4 276.7,698.3 278.5,696.1 279.4,696.4 281.2,694.9 283,693.3 284.9,692.1 286.7,692.8 287.6,696.2 289.4,693.3 291.2,691.9 292.1,690.9 293.9,694.5 294.8,693.4 296.6,690.9 298.4,690.1 299.3,697.9 300.2,703 301.1,706.8 302,709.1 303.8,713.2 305.6,715 307.4,716.1 309.2,717 312.9,720 316.5,721.3 320.1,722.8 325.5,725.2 330.9,726.4 338.1,728.1 345.4,729.6 352.6,730.5 361.6,731.4 370.6,732 388.7,732.7"/>
  </g>
  <g stroke="rgba(20,20,40,.15)" stroke-width="1">
    <path d="M269.50 185V759"/>
    <path d="M305.62 185V759"/>
    <path d="M341.75 185V759"/>
    <path d="M377.88 185V759"/>
    <path d="M414.00 185V759"/>
    <path d="M450.12 185V759"/>
    <path d="M486.25 185V759"/>
    <path d="M522.38 185V759"/>
    <path d="M558.50 185V759"/>
    <path d="M594.62 185V759"/>
    <path d="M630.75 185V759"/>
    <path d="M666.88 185V759"/>
    <path d="M703.00 185V759"/>
  </g>
  <g stroke="rgba(20,20,40,.10)" stroke-width="1">
    <path d="M252 733.50H705"/>
    <path d="M252 690.99H705"/>
    <path d="M252 648.48H705"/>
    <path d="M252 605.98H705"/>
    <path d="M252 563.47H705"/>
    <path d="M252 520.96H705"/>
    <path d="M252 478.45H705"/>
    <path d="M252 435.94H705"/>
    <path d="M252 393.44H705"/>
    <path d="M252 350.93H705"/>
    <path d="M252 308.42H705"/>
    <path d="M252 265.91H705"/>
    <path d="M252 223.40H705"/>
  </g>
</svg>
<div id="right" class="abs">
  <div class="sec" id="general">GENERAL</div>
  <div id="rcontent" class="abs">
    <div class="track" style="top:24px"></div><div class="knob" style="left:19px;top:21px"></div><div class="lbl" style="top:24px">Legend</div>
    <div class="track" style="top:64px;background:#f0dcaa"></div><div class="knob" style="left:34px;top:61px;background:#dcac40"></div><div class="lbl" style="top:64px">Grid</div>
    <div class="track" style="top:104px"></div><div class="knob" style="left:19px;top:101px"></div><div class="lbl" style="top:104px;letter-spacing:.43px">Information</div>
    <div class="track" style="top:144px"></div><div class="knob" style="left:19px;top:141px"></div><div class="lbl" style="top:144px">Dosing times</div>
    <div class="t" style="left:0;width:279px;text-align:center;top:186px;font-size:16.5px;color:#999">Zoom</div>
    <div class="lbl" style="left:20px;top:219px;letter-spacing:.19px">Zoom constraint</div>
    <div class="radio on" style="top:236px"></div><div class="lbl" style="left:52px;top:240px">None</div>
    <div class="radio" style="top:260px"></div><div class="lbl" style="left:52px;top:264px;letter-spacing:-.3px">X-axis</div>
    <div class="radio" style="top:284px"></div><div class="lbl" style="left:52px;top:288px;letter-spacing:-.3px">Y-axis</div>
  </div>
  <div class="sec" style="top:378px;height:34px;line-height:30px">DISPLAY</div>
  <div class="sec" style="top:412px;height:34px;line-height:30px">BINS</div>
  <div class="sec" style="top:446px;height:34px;line-height:30px">AXES</div>
  <div class="btab" style="left:-1px;width:93px"><span>STRATIFY</span></div>
  <div class="btab" style="left:92px;width:94px;background:#999;color:#fff"><span>SETTINGS</span></div>
  <div class="btab" style="left:186px;width:93px"><span>PREFERE...</span></div>
</div>
<div id="frame"></div>
</body>
</html>
